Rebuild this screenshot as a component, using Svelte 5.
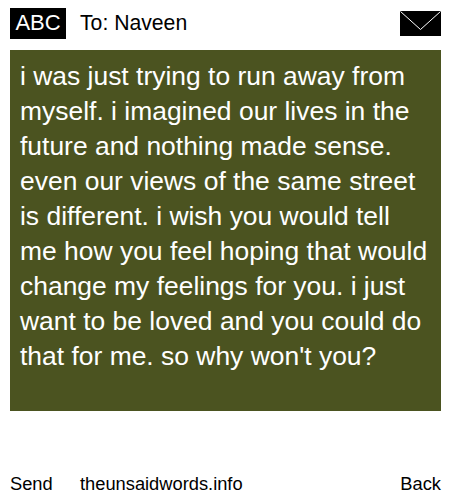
<script>
  let recipient = 'Naveen';
  let message = "i was just trying to run away from myself. i imagined our lives in the future and nothing made sense. even our views of the same street is different. i wish you would tell me how you feel hoping that would change my feelings for you. i just want to be loved and you could do that for me. so why won't you?";
</script>

<main>
  <header>
    <span class="abc">ABC</span>
    <span class="to">To: {recipient}</span>
    <svg class="envelope" width="41" height="25" viewBox="0 0 41 25">
      <rect width="41" height="25" fill="#000" />
      <path d="M0.5 0.5 L20.5 18.5 L40.5 0.5" fill="none" stroke="#fff" stroke-width="1" />
    </svg>
  </header>

  <div class="note">{message}</div>

  <footer>
    <span class="send">Send</span>
    <span class="site">theunsaidwords.info</span>
    <span class="back">Back</span>
  </footer>
</main>

<style>
  :global(body) {
    background: #fff;
  }
  main {
    width: 450px;
    height: 500px;
    display: flex;
    flex-direction: column;
    font-family: "Liberation Sans", Arial, sans-serif;
    color: #000;
  }
  header {
    display: flex;
    align-items: center;
    height: 50px;
    padding: 0 9px 4px 10px;
    box-sizing: border-box;
  }
  .abc {
    background: #000;
    color: #fff;
    width: 56px;
    height: 31px;
    line-height: 29px;
    text-align: center;
    font-size: 22px;
  }
  .to {
    margin-left: 14px;
    flex: 1;
    font-size: 21.2px;
    line-height: 29px;
    padding-bottom: 2px;
  }
  .note {
    margin: 0 9px 0 10px;
    height: 361px;
    box-sizing: border-box;
    background: #4b5320;
    color: #fff;
    padding: 9px 10px 10px;
    font-size: 26.45px;
    line-height: 35px;
  }
  footer {
    display: flex;
    margin-top: 62px;
    padding: 0 9px 0 10px;
    font-size: 18.3px;
  }
  .send {
    width: 70px;
  }
  .site {
    flex: 1;
  }
</style>
